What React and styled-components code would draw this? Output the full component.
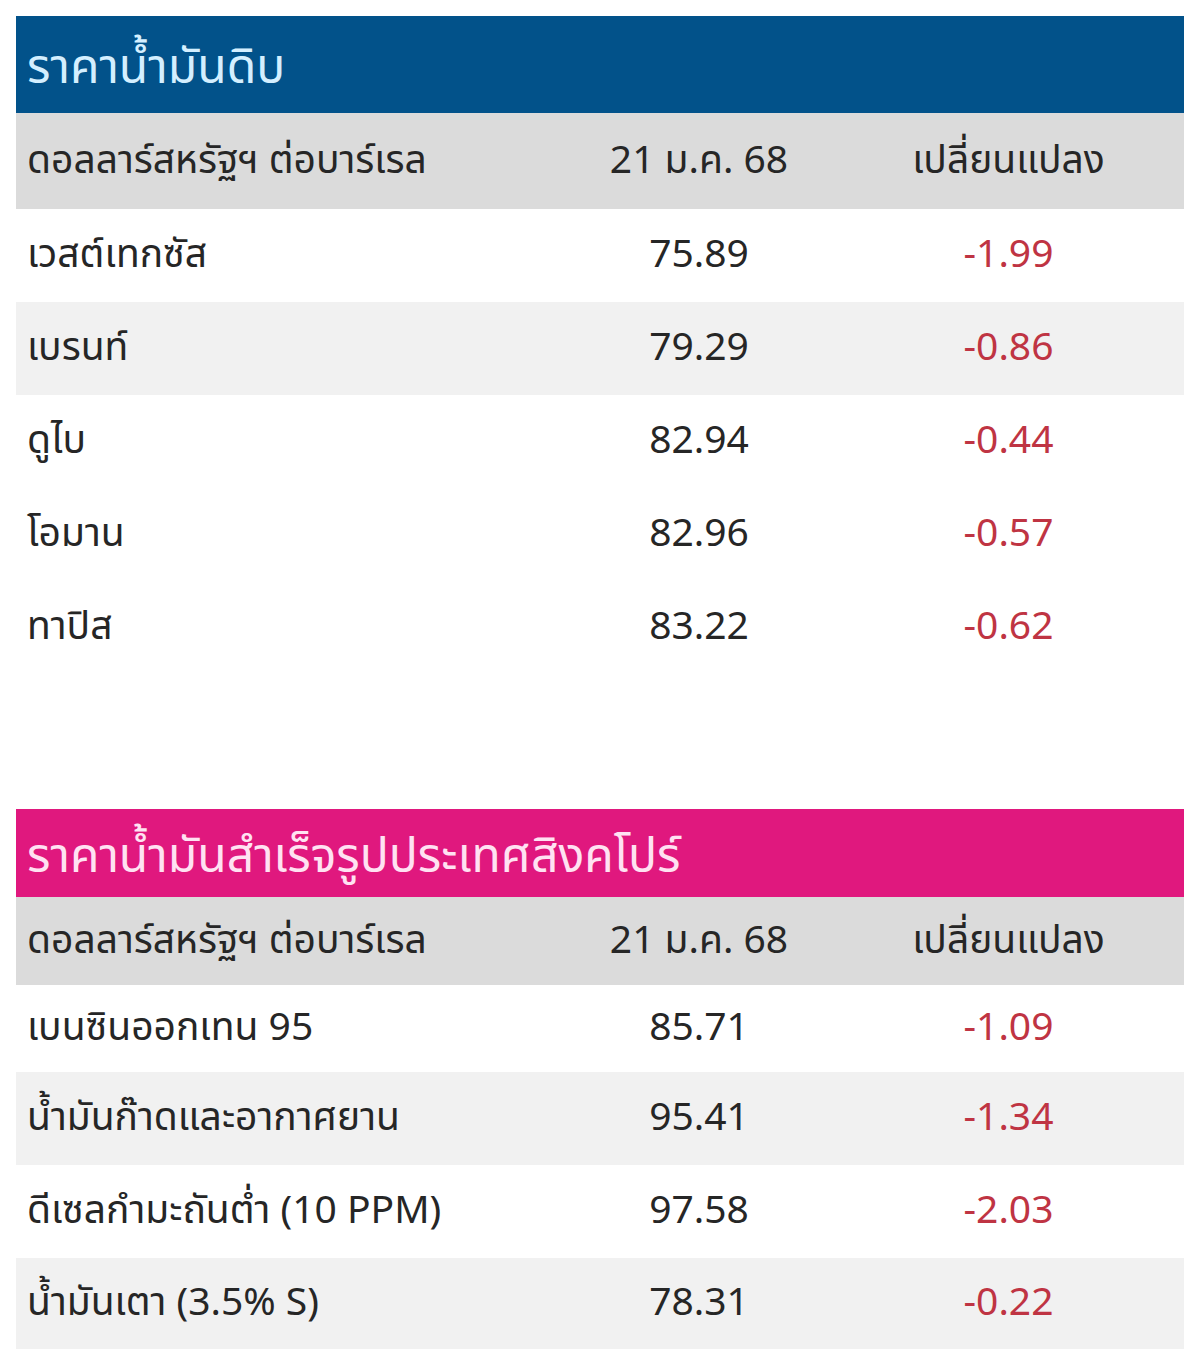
import React from 'react'
import styled, { createGlobalStyle } from 'styled-components'

const crude = [
  { name: 'เวสต์เทกซัส', price: '75.89', change: '-1.99' },
  { name: 'เบรนท์', price: '79.29', change: '-0.86', stripe: true },
  { name: 'ดูไบ', price: '82.94', change: '-0.44' },
  { name: 'โอมาน', price: '82.96', change: '-0.57' },
  { name: 'ทาปิส', price: '83.22', change: '-0.62' },
]

const refined = [
  { name: 'เบนซินออกเทน 95', price: '85.71', change: '-1.09', h: 87 },
  { name: 'น้ำมันก๊าดและอากาศยาน', price: '95.41', change: '-1.34', stripe: true },
  { name: 'ดีเซลกำมะถันต่ำ (10 PPM)', price: '97.58', change: '-2.03' },
  { name: 'น้ำมันเตา (3.5% S)', price: '78.31', change: '-0.22', stripe: true, h: 91 },
]

function PriceTable({ title, color, titleColor, titleH, headH, rowH, rows }) {
  return (
    <Table>
      <TitleBar $bg={color} $fg={titleColor} $h={titleH}>{title}</TitleBar>
      <HeadRow $h={headH}>
        <NameCell>ดอลลาร์สหรัฐฯ ต่อบาร์เรล</NameCell>
        <NumCell>21 ม.ค. 68</NumCell>
        <NumCell>เปลี่ยนแปลง</NumCell>
      </HeadRow>
      {rows.map((r) => (
        <Row key={r.name} $stripe={r.stripe} $h={r.h || rowH}>
          <NameCell>{r.name}</NameCell>
          <NumCell>{r.price}</NumCell>
          <NumCell $down>{r.change}</NumCell>
        </Row>
      ))}
    </Table>
  )
}

export default function App() {
  return (
    <>
      <GlobalStyle />
      <Page>
        <PriceTable
          title="ราคาน้ำมันดิบ"
          color="#02528a"
          titleColor="#d4efff"
          titleH={97}
          headH={96}
          rowH={93}
          rows={crude}
        />
        <PriceTable
          title="ราคาน้ำมันสำเร็จรูปประเทศสิงคโปร์"
          color="#e0187e"
          titleColor="#ffe2f2"
          titleH={88}
          headH={88}
          rowH={93}
          rows={refined}
        />
      </Page>
    </>
  )
}

const GlobalStyle = createGlobalStyle`
  body {
    margin: 0;
    background: #ffffff;
    font-family: Tahoma, "Noto Sans Thai", "Liberation Sans", "Noto Sans", sans-serif;
  }
`

const Page = styled.div`
  display: flex;
  flex-direction: column;
  gap: 135px;
  padding: 16px;
`

const Table = styled.div`
  display: flex;
  flex-direction: column;
  width: 1168px;
`

const TitleBar = styled.div`
  height: ${(p) => p.$h}px;
  display: flex;
  align-items: center;
  padding: 8px 11px 0;
  box-sizing: border-box;
  background: ${(p) => p.$bg};
  color: ${(p) => p.$fg};
  font-size: 48px;
`

const Row = styled.div`
  display: grid;
  grid-template-columns: 549px 268px 1fr;
  align-items: center;
  height: ${(p) => p.$h}px;
  background: ${(p) => (p.$stripe ? '#f1f1f1' : '#ffffff')};
  color: #262626;
  font-size: 39px;
`

const HeadRow = styled(Row)`
  background: #dbdbdb;
`

const NameCell = styled.div`
  padding-left: 11px;
  white-space: nowrap;
`

const NumCell = styled.div`
  text-align: center;
  white-space: nowrap;
  color: ${(p) => (p.$down ? '#bf3443' : 'inherit')};
`
